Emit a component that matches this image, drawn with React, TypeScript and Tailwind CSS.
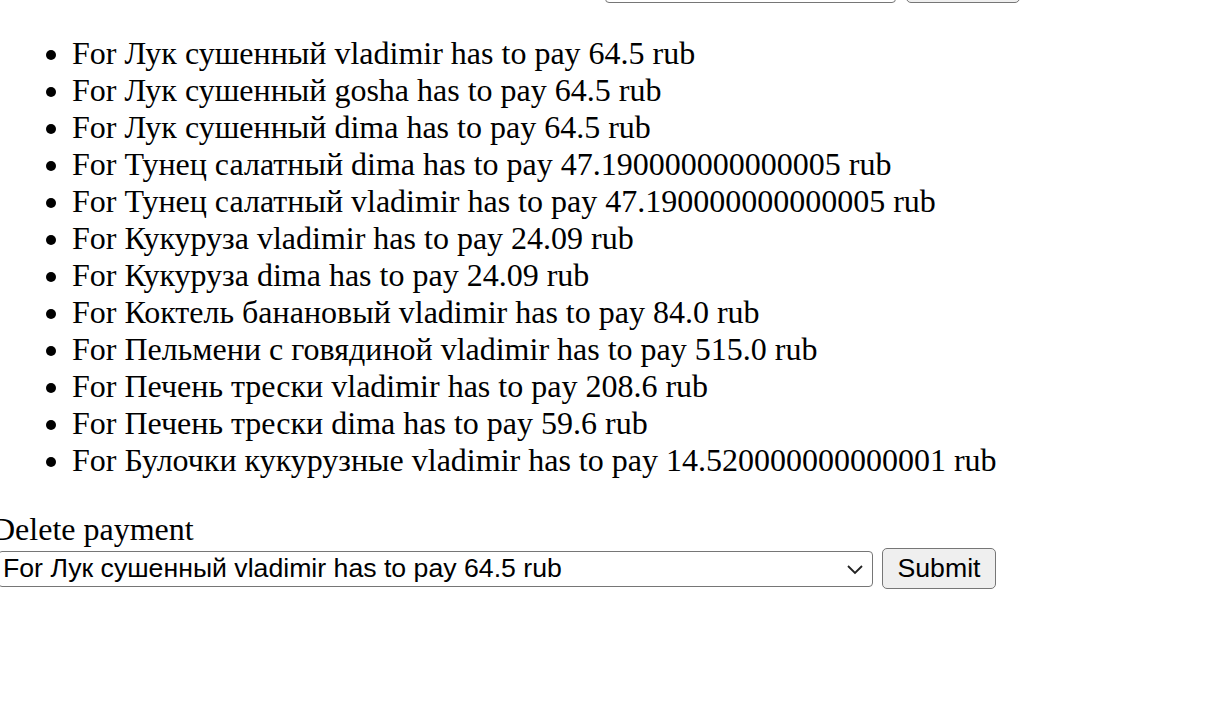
import React from "react";

const payments = [
  "For Лук сушенный vladimir has to pay 64.5 rub",
  "For Лук сушенный gosha has to pay 64.5 rub",
  "For Лук сушенный dima has to pay 64.5 rub",
  "For Тунец салатный dima has to pay 47.190000000000005 rub",
  "For Тунец салатный vladimir has to pay 47.190000000000005 rub",
  "For Кукуруза vladimir has to pay 24.09 rub",
  "For Кукуруза dima has to pay 24.09 rub",
  "For Коктель банановый vladimir has to pay 84.0 rub",
  "For Пельмени с говядиной vladimir has to pay 515.0 rub",
  "For Печень трески vladimir has to pay 208.6 rub",
  "For Печень трески dima has to pay 59.6 rub",
  "For Булочки кукурузные vladimir has to pay 14.520000000000001 rub",
];

function Chevron() {
  return (
    <svg width="18" height="12" viewBox="0 0 18 12" className="pointer-events-none absolute right-[9px] top-1/2 -translate-y-1/2">
      <path d="M2 3l7 7 7-7" fill="none" stroke="#222" strokeWidth="1.8" />
    </svg>
  );
}

function SelectBox({ width, value }: { width: string; value: string }) {
  return (
    <div className={`relative h-[36px] ${width}`}>
      <select
        defaultValue={value}
        className="block h-full w-full appearance-none rounded-[4px] border border-[#767676] bg-white pl-[4px] pr-[30px] text-[26.67px] leading-none text-black outline-none"
        style={{ fontFamily: '"Liberation Sans", Arial, sans-serif' }}
      >
        {payments.map((p) => (
          <option key={p}>{p}</option>
        ))}
      </select>
      <Chevron />
    </div>
  );
}

function SubmitBtn() {
  return (
    <button
      className="block h-[41px] w-[114px] rounded-[5px] border border-[#767676] bg-[#efefef] text-[26.67px] leading-none text-black"
      style={{ fontFamily: '"Liberation Sans", Arial, sans-serif' }}
    >
      Submit
    </button>
  );
}

export default function App() {
  return (
    <div
      className="-ml-[8px] min-h-[716px] bg-white text-[32px] text-black"
      style={{ fontFamily: '"Liberation Serif", "Times New Roman", serif' }}
    >
      {/* previous form, mostly scrolled away */}
      <div className="-mt-[38px] flex h-[41px] items-end gap-[10px] pl-[613px]">
        <SelectBox width="w-[291px]" value={payments[0]} />
        <SubmitBtn />
      </div>

      <ul className="mt-[32px] mb-[32px] list-disc pl-[80px] leading-[37px]">
        {payments.map((p) => (
          <li key={p}>{p}</li>
        ))}
      </ul>

      <div className="leading-[37px]">Delete payment</div>
      <div className="flex h-[41px] items-center gap-[9px] pl-[6px]">
        <SelectBox width="w-[875px]" value={payments[0]} />
        <SubmitBtn />
      </div>
    </div>
  );
}
